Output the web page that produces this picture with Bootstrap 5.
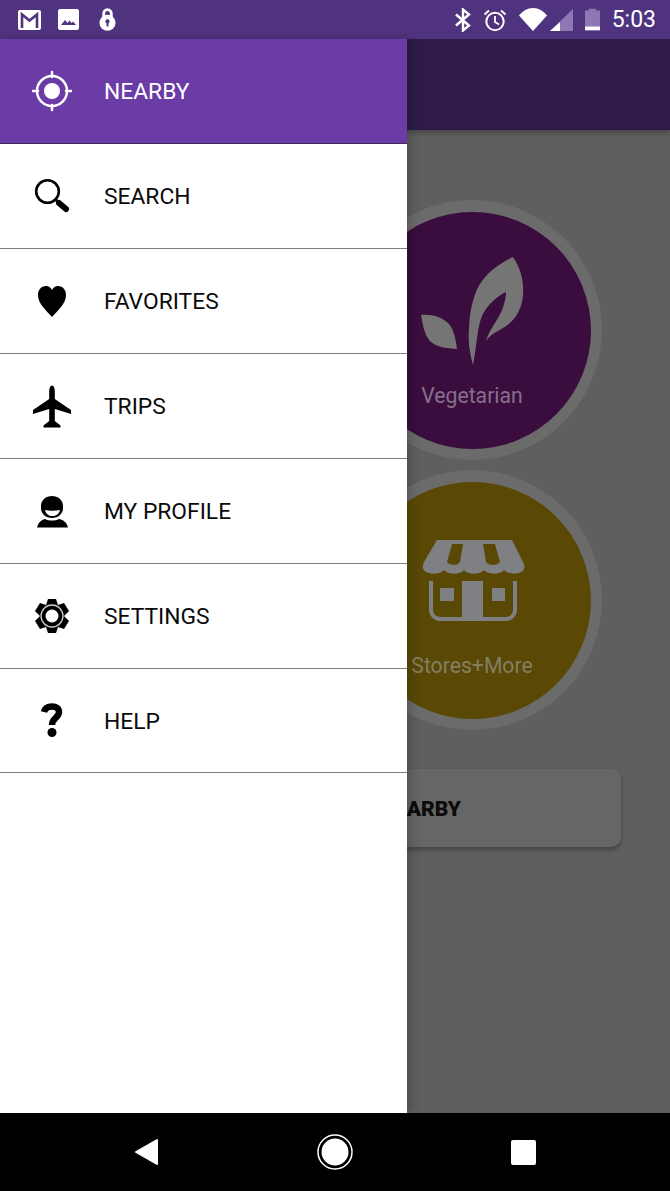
<!DOCTYPE html>
<html lang="en">
<head>
    <meta charset="UTF-8">
    <meta name="viewport" content="width=device-width, initial-scale=1.0">
    <title>Nearby - Drawer</title>
    <link href="https://cdn.jsdelivr.net/npm/bootstrap@5.3.0/dist/css/bootstrap.min.css" rel="stylesheet">
    <style>
        html, body {
            height: 100%;
        }
        body {
            font-family: Roboto, "Liberation Sans", sans-serif;
            background: #000;
            overflow: hidden;
        }
        .phone {
            width: 670px;
            height: 1191px;
        }
        .status-bar {
            height: 39px;
            background: #50337f;
            color: #fff;
            padding: 0 14px 0 18px;
        }
        .status-left {
            gap: 17px;
        }
        .status-right {
            gap: 12px;
        }
        .status-lock {
            margin-left: 3px;
        }
        .signal-pair {
            gap: 3px;
        }
        .status-time {
            font-size: 23px;
            line-height: 1;
        }
        .screen {
            height: 1074px;
            background: #5f5f5f;
        }
        .app-bar {
            height: 91px;
            background: #2e1b49;
            box-shadow: 0 3px 5px rgba(0, 0, 0, .25);
        }
        .behind {
            padding: 70px 0 0 342px;
        }
        .cat-ring {
            width: 260px;
            height: 260px;
            border-radius: 50%;
            background: #6b6b6b;
            margin-bottom: 10px;
        }
        .cat-disc {
            width: 237px;
            height: 237px;
            border-radius: 50%;
        }
        .cat-veg {
            background: #3a0d3e;
            color: #85708a;
        }
        .cat-veg svg {
            margin-top: 38px;
        }
        .cat-veg .cat-label {
            margin-top: 19px;
        }
        .cat-store {
            background: #5a4905;
            color: #847e62;
        }
        .cat-store svg {
            margin-top: 58px;
        }
        .cat-store .cat-label {
            margin-top: 32px;
        }
        .cat-label {
            font-size: 21.2px;
            line-height: 24px;
        }
        .nearby-btn {
            width: 339px;
            height: 78px;
            margin: 39px 0 0 -60px;
            padding: 3px 160px 0 0;
            background: #666;
            border-radius: 10px;
            box-shadow: 0 3px 5px rgba(0, 0, 0, .3);
            font-weight: 900;
            font-size: 21px;
            color: #0c0c0c;
        }
        .drawer {
            position: absolute;
            top: 0;
            left: 0;
            bottom: 0;
            width: 407px;
            background: #fff;
            box-shadow: 4px 0 10px rgba(0, 0, 0, .18);
        }
        .drawer-item {
            height: 105px;
            padding: 3px 0 0 104px;
            font-size: 22.8px;
            color: #0a0a0a;
            border-bottom: 1px solid #7c7c7c;
        }
        .drawer-item:last-child {
            height: 104px;
        }
        .drawer-item.active-item {
            background: #6b3ba6;
            color: #fff;
            border-bottom-color: #3f2a5c;
        }
        .drawer-icon {
            position: absolute;
            left: 27px;
            width: 50px;
            height: 50px;
            margin-top: -3px;
        }
        .nav-bar {
            height: 78px;
            background: #000;
        }
    </style>
</head>
<body>
    <div class="phone d-flex flex-column">
        <!-- status bar -->
        <div class="status-bar d-flex align-items-center justify-content-between">
            <div class="status-left d-flex align-items-center">
                <svg width="23" height="20" viewBox="0 0 23 20"><path fill="#fff" d="M2 0h19a2 2 0 0 1 2 2v16a2 2 0 0 1-2 2H2a2 2 0 0 1-2-2V2a2 2 0 0 1 2-2z"/><path fill="none" stroke="#50337f" stroke-width="2.600" d="M4 18V4.500l7.500 6 7.500-6V18"/></svg>
                <svg width="21" height="21" viewBox="0 0 21 21"><rect width="21" height="21" rx="2" fill="#fff"/><path fill="#50337f" d="M3 16l4-5 2.500 3 2-2.500 2 2.500 1.500-1.500L18 16z"/></svg>
                <svg class="status-lock" width="17" height="25" viewBox="0 0 18 25"><path fill="none" stroke="#fff" stroke-width="3" d="M5 11V6a4 4 0 0 1 8 0v5"/><circle cx="9" cy="16" r="8.500" fill="#fff"/><circle cx="9" cy="14.500" r="2.200" fill="#50337f"/><rect x="8" y="15" width="2" height="5" fill="#50337f"/></svg>
            </div>
            <div class="status-right d-flex align-items-center">
                <svg width="16" height="24" viewBox="0 0 16 24"><path fill="none" stroke="#fff" stroke-width="2.400" d="M1 6.500l13 11-6 5V1.500l6 5-13 11"/></svg>
                <svg width="24" height="24" viewBox="0 0 24 24"><circle cx="12" cy="13.500" r="8.700" fill="none" stroke="#fff" stroke-width="2"/><path fill="none" stroke="#fff" stroke-width="1.800" d="M12 8v6l4 2.500M1.500 6.500L6 2.500M22.500 6.500L18 2.500"/></svg>
                <span class="signal-pair d-flex align-items-center">
                    <svg width="28" height="23" viewBox="0 0 28 23"><path fill="#fff" d="M14 23L0 7.500C3.500 3 8.500 0 14 0s10.500 3 14 7.500z"/></svg>
                    <svg width="23" height="22" viewBox="0 0 23 22"><path fill="#8e78b4" d="M23 0v22H0z"/><path fill="#fff" d="M10 13v9H0z"/></svg>
                </span>
                <svg width="15" height="23" viewBox="0 0 16 23"><path fill="#8e78b4" d="M4 2V0h8v2h4v21H0V2z"/><rect y="19" width="16" height="4" fill="#fff"/></svg>
                <span class="status-time">5:03</span>
            </div>
        </div>

        <div class="screen position-relative">
            <!-- page under the drawer -->
            <div class="app-bar"></div>
            <div class="behind">
                <div class="cat-ring d-flex align-items-center justify-content-center">
                    <div class="cat-disc cat-veg d-flex flex-column align-items-center">
                        <svg width="120" height="115" viewBox="0 0 120 115">
                            <path fill="#757575" d="M101 7C110 20 112 35 111 45C110 60 102 72 91 78C84 82 78 85 74 91C78 78 85 72 90 60C93 52 94 47 94 42C85 46 75 55 70 66C65 78 65 95 61 115C57 100 56 90 57 78C58 58 62 42 70 31C78 20 90 12 101 7z"/>
                            <path fill="#757575" d="M9 65C20 64 30 67 37 74C42 80 44 90 45 99C35 98 25 98 18 91C12 84 11 75 9 65z"/>
                        </svg>
                        <span class="cat-label">Vegetarian</span>
                    </div>
                </div>
                <div class="cat-ring d-flex align-items-center justify-content-center">
                    <div class="cat-disc cat-store d-flex flex-column align-items-center">
                        <svg width="112" height="82" viewBox="0 0 112 82">
                            <path fill="#7f8083" d="M21 0H96L107 22C110 28 108 32 103 33C97 35 91 33 88 30C84 35 73 35 68 30C64 35 52 35 48 30C44 35 32 35 28 30C25 33 19 35 13 33C8 32 5 28 8 22z"/>
                            <path fill="#5a4905" d="M36 4H47L44 22C42 26 34 26 31 22zM67 4H79L84 22C81 26 73 26 70 22z"/>
                            <path fill="none" stroke="#7f8083" stroke-width="4" d="M15 41V69C15 75 19 79 25 79H89C95 79 99 75 99 69V41"/>
                            <path fill="#7f8083" d="M46 41H67V77H46zM24 48H38V61H24zM76 48H89V61H76z"/>
                        </svg>
                        <span class="cat-label">Stores+More</span>
                    </div>
                </div>
                <div class="nearby-btn d-flex align-items-center justify-content-end">NEARBY</div>
            </div>

            <!-- drawer -->
            <div class="drawer">
                <div class="drawer-item active-item d-flex align-items-center">
                    <svg class="drawer-icon" viewBox="0 0 50 50"><circle cx="25" cy="25" r="15" fill="none" stroke="#fff" stroke-width="2.500"/><circle cx="25" cy="25" r="8" fill="#fff"/><path stroke="#fff" stroke-width="2.500" stroke-linecap="round" d="M25 6v5M25 39v5M6 25h5M39 25h5"/></svg>
                    <span>NEARBY</span>
                </div>
                <div class="drawer-item d-flex align-items-center">
                    <svg class="drawer-icon" viewBox="0 0 50 50"><circle cx="20.500" cy="20.500" r="11.300" fill="none" stroke="#000" stroke-width="2.600"/><path stroke="#000" stroke-width="2.600" d="M28 28l4 4"/><path stroke="#000" stroke-width="6" stroke-linecap="round" d="M32 32l7 6"/></svg>
                    <span>SEARCH</span>
                </div>
                <div class="drawer-item d-flex align-items-center">
                    <svg class="drawer-icon" viewBox="0 0 50 50"><path fill="#000" d="M25 41C19 34 11 28 11 19c0-5 3-9 8-9 3 0 5 2 6 4 1-2 3-4 6-4 5 0 8 4 8 9 0 9-8 15-14 22z"/></svg>
                    <span>FAVORITES</span>
                </div>
                <div class="drawer-item d-flex align-items-center">
                    <svg class="drawer-icon" viewBox="0 0 50 50"><path fill="#000" d="M25 4.500c1.800 0 2.800 3 2.800 6V18L44 29v4L27.800 28V40l5.700 4.500v2h-17v-2l5.700-4.500V28L6 33V29L22.200 18V10.500c0-3 1-6 2.800-6z"/></svg>
                    <span>TRIPS</span>
                </div>
                <div class="drawer-item d-flex align-items-center">
                    <svg class="drawer-icon" viewBox="0 0 50 50"><path fill="#000" d="M25 10c6 0 11 4 11 10v2c0 6-5 10-11 10s-11-4-11-10v-2c0-6 5-10 11-10zM18 33c4 2 10 2 14 0 5 1 8 4 9 8.500H10c1-4.500 4-7.500 8-8.500z"/><path fill="#fff" d="M18 24c4 1 10 1 15 0-1 4-4 6-7.500 6s-6.500-2-7.500-6z"/></svg>
                    <span>MY PROFILE</span>
                </div>
                <div class="drawer-item d-flex align-items-center">
                    <svg class="drawer-icon" viewBox="0 0 50 50"><path fill="#000" d="M21 8h8l2 6 6-2 5 8-5 5 5 5-5 8-6-2-2 6h-8l-2-6-6 2-5-8 5-5-5-5 5-8 6 2z"/><circle cx="25" cy="25" r="11" fill="none" stroke="#ccc" stroke-width="1.300"/><circle cx="25" cy="25" r="6.500" fill="#fff"/></svg>
                    <span>SETTINGS</span>
                </div>
                <div class="drawer-item d-flex align-items-center">
                    <svg class="drawer-icon" viewBox="0 0 50 50"><path fill="none" stroke="#000" stroke-width="6.500" d="M17 16C18 12 21 10.500 25 10.500C29 10.500 32 12.500 32 16C32 22 25 22 25 29"/><circle cx="25" cy="36.500" r="4.500" fill="#000"/></svg>
                    <span>HELP</span>
                </div>
            </div>
        </div>

        <!-- android buttons -->
        <div class="nav-bar">
            <svg width="670" height="78" viewBox="0 0 670 78">
                <path fill="#fff" stroke="#fff" stroke-width="2" stroke-linejoin="round" d="M136 39l21-12v24z"/>
                <circle cx="335" cy="39" r="17" fill="none" stroke="#fff" stroke-width="1.500"/>
                <circle cx="335" cy="39" r="13.500" fill="#fff"/>
                <rect x="511" y="27" width="25" height="25" rx="2" fill="#fff"/>
            </svg>
        </div>
    </div>
    <script src="https://cdn.jsdelivr.net/npm/bootstrap@5.3.0/dist/js/bootstrap.bundle.min.js"></script>
</body>
</html>
